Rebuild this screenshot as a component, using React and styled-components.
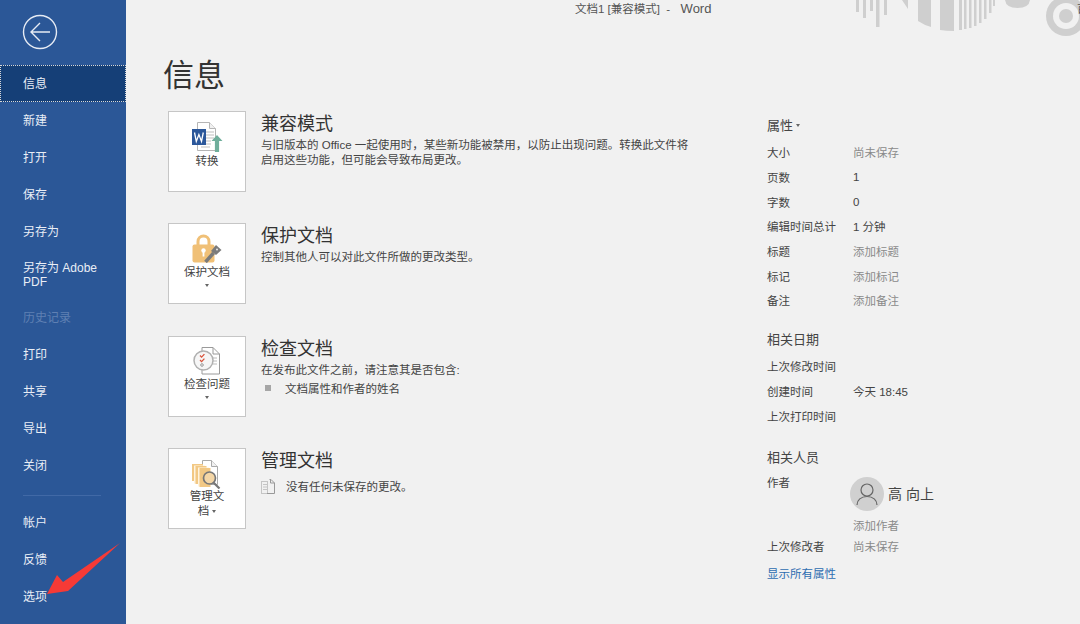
import React from "react";
import styled, { createGlobalStyle } from "styled-components";

const FONT = `"Liberation Sans", "Noto Sans CJK SC", sans-serif`;

const Global = createGlobalStyle`
    html, body { margin: 0; padding: 0; background: #f1f1f1; }
    body { font-family: ${FONT}; overflow: hidden; }
    * { box-sizing: border-box; }
`;

const Page = styled.div`
    position: relative;
    width: 1080px;
    height: 624px;
    display: flex;
    overflow: hidden;
    background: #f1f1f1;
    color: #444;
`;

const Side = styled.nav`
    width: 126px;
    height: 624px;
    flex-shrink: 0;
    background: #2b5797;
    display: flex;
    flex-direction: column;
`;

const BackWrap = styled.div`
    height: 65px;
    flex-shrink: 0;
    padding: 14px 0 0 22px;
`;

const NavItem = styled.div`
    height: ${p => (p.$tall ? 49 : 37)}px;
    flex-shrink: 0;
    padding-left: 23px;
    display: flex;
    align-items: center;
    font-size: 12px;
    line-height: 14px;
    color: ${p => (p.$disabled ? "#5f80b3" : "#e9eef6")};
    background: ${p => (p.$active ? "#153f77" : "transparent")};
    outline: ${p => (p.$active ? "1px dotted #d8d8d8" : "none")};
    outline-offset: -1px;
`;

const NavLine = styled.div`
    height: 1px;
    width: 78px;
    flex-shrink: 0;
    margin: 11px 0 8px 23px;
    background: #4169a6;
`;

const Main = styled.main`
    flex: 1;
    display: flex;
    min-width: 0;
`;

const LeftCol = styled.div`
    width: 641px;
    padding: 54px 0 0 37px;
    flex-shrink: 0;
`;

const Title = styled.h1`
    margin: 0 0 13px;
    height: 44px;
    font-size: 31px;
    line-height: 44px;
    font-weight: 400;
    color: #333;
`;

const Section = styled.section`
    display: flex;
    height: 112.4px;
    padding-left: 5px;
`;

const Tile = styled.div`
    width: 78px;
    height: 81px;
    flex-shrink: 0;
    background: #fff;
    border: 1px solid #c6c6c6;
    display: flex;
    flex-direction: column;
    align-items: center;
    padding-top: ${p => p.$top || 9}px;
    font-size: 11.5px;
    line-height: 14px;
    color: #444;
    text-align: center;
`;

const TileLabel = styled.div`
    margin-top: ${p => p.$gap || 0}px;
    width: ${p => p.$w || "auto"};
    line-height: ${p => (p.$w ? 15 : 14)}px;
`;

const Caret = styled.span`
    display: ${p => (p.$inline ? "inline-block" : "block")};
    width: 0;
    height: 0;
    margin: ${p => (p.$inline ? "0 0 2px 3px" : "5px auto 0")};
    border-left: 2.5px solid transparent;
    border-right: 2.5px solid transparent;
    border-top: 3px solid #666;
`;

const Body = styled.div`
    margin-left: 15px;
    padding-top: 1px;
    min-width: 0;
`;

const Heading = styled.h2`
    margin: 0 0 2px;
    font-size: 18px;
    line-height: 24px;
    font-weight: 400;
    color: #333;
`;

const Desc = styled.p`
    margin: 0;
    font-size: 11.5px;
    line-height: 15px;
    color: #444;
    width: 430px;
`;

const Bullet = styled.div`
    display: flex;
    align-items: center;
    height: 15px;
    margin-top: 3px;
    font-size: 11.5px;
    color: #444;
`;

const Square = styled.span`
    width: 6px;
    height: 6px;
    background: #a6a6a6;
    margin: 0 14px 0 4px;
`;

const NoteRow = styled.div`
    display: flex;
    align-items: center;
    gap: 11px;
    height: 16px;
    margin-top: 5px;
    font-size: 11.5px;
    color: #444;
`;

const RightCol = styled.aside`
    width: 313px;
    padding-top: 115px;
`;

const PropHead = styled.h3`
    margin: 0 0 3px;
    height: 22px;
    font-size: 13px;
    line-height: 22px;
    font-weight: 400;
    color: #444;
    display: flex;
    align-items: center;
`;

const PropGroup = styled.div`
    margin-bottom: ${p => p.$gap || 0}px;
`;

const PropRow = styled.div`
    display: flex;
    height: 24.7px;
    align-items: center;
    font-size: 11.5px;
`;

const PropLabel = styled.div`
    width: 86px;
    color: #444;
    white-space: nowrap;
`;

const PropValue = styled.div`
    color: ${p => (p.$muted ? "#8a8a8a" : "#444")};
    font-size: 11.5px;
    white-space: nowrap;
`;

const AuthorRow = styled.div`
    display: flex;
    height: 40px;
    padding-top: 2px;
    font-size: 11.5px;
`;

const AuthorLabel = styled(PropLabel)`
    line-height: 14px;
    padding-top: 2px;
    width: 83px;
`;

const Avatar = styled.div`
    width: 34px;
    height: 34px;
    margin-top: 3px;
    border-radius: 50%;
    background: #d0d0d0;
    display: flex;
    align-items: center;
    justify-content: center;
`;

const AuthorName = styled.div`
    margin: 3px 0 0 4px;
    height: 34px;
    line-height: 34px;
    font-size: 14px;
    color: #444;
`;

const AddAuthor = styled.div`
    height: 22px;
    padding: 7px 0 0 86px;
    font-size: 11.5px;
    line-height: 14px;
    color: #8a8a8a;
`;

const ShowAll = styled.div`
    margin-top: 8px;
    font-size: 11.5px;
    line-height: 14px;
    color: #2e6db0;
`;

const WindowTitle = styled.div`
    position: absolute;
    top: 2px;
    left: 575px;
    font-size: 11.5px;
    line-height: 14px;
    color: #555;
    white-space: pre;
`;

const WordMark = styled.span`
    font-size: 13px;
    margin-left: 4px;
`;

const Deco = styled.svg`
    position: absolute;
    top: 0;
    left: 840px;
`;

const CornerChar = styled.div`
    position: absolute;
    top: 2px;
    left: 1077px;
    font-size: 11px;
    line-height: 14px;
    color: #555;
`;

const ArrowMark = styled.svg`
    position: absolute;
    left: 40px;
    top: 538px;
`;

const BackIcon = () => (
    <svg width="36" height="36" viewBox="0 0 36 36" fill="none" stroke="#e6ebf4" strokeWidth="1.4">
        <circle cx="18" cy="18" r="16.5" />
        <path d="M9 18h19M18 9l-9 9 9 9" />
    </svg>
);

const ConvertIcon = () => (
    <svg width="31" height="31" viewBox="0 0 31 31">
        <path d="M5.500.5h12l6 6v22h-18z" fill="#fff" stroke="#b5b5b5" />
        <path d="M17.500.5v6h6" fill="#f1f1f1" stroke="#b5b5b5" />
        <path d="M14 10h8M14 13h8M14 16h8M14 19h5M14 22h5M9 25h9" stroke="#bdbdbd" />
        <rect x="0" y="7" width="14" height="16" fill="#2b579a" />
        <path d="M2.500 10.500l1.800 9 2.600-7 2.600 7 1.800-9" fill="none" stroke="#fff" strokeWidth="1.300" />
        <path d="M25 13l5.500 6h-3.400v11h-4.200V19h-3.400z" fill="#6fae9b" />
    </svg>
);

const LockIcon = () => (
    <svg width="30" height="29" viewBox="0 0 30 29">
        <path d="M6 12V7.500a5.500 5.500 0 0 1 11 0V12" fill="none" stroke="#f0c077" strokeWidth="3" />
        <rect x="0.500" y="10.500" width="22" height="18" rx="2" fill="#f0c077" />
        <circle cx="11.500" cy="16.500" r="2.200" fill="#fff" />
        <rect x="10.600" y="16.500" width="1.800" height="6" fill="#fff" />
        <path d="M13.500 28l8-9" stroke="#7b7b7b" strokeWidth="3.500" />
        <path d="M19 17l5-6 5.500 5-5.500 5z" fill="#7b7b7b" />
        <circle cx="25" cy="15.500" r="0.900" fill="#f1f1f1" />
    </svg>
);

const CheckIcon = () => (
    <svg width="28" height="28" viewBox="0 0 28 28">
        <path d="M9 .5h11l6.500 6.500v20H9z" fill="#fff" stroke="#9a9a9a" />
        <path d="M20 .5V7h6.500" fill="none" stroke="#9a9a9a" />
        <path d="M20 11h4M20 14h4M20 17h4" stroke="#bbb" />
        <circle cx="10.500" cy="13.500" r="9.500" fill="#f6f6f6" stroke="#b0b0b0" strokeWidth="1.500" />
        <path d="M7 8.500l1.600 1.600 2.800-3M7 13l1.600 1.600 2.800-3" fill="none" stroke="#d9533b" strokeWidth="1.300" />
        <circle cx="9" cy="18" r="1.300" fill="none" stroke="#999" />
    </svg>
);

const ManageIcon = () => (
    <svg width="30" height="29" viewBox="0 0 30 29">
        <path d="M10.500.500h9l6 6v18h-15z" fill="#fff" stroke="#aaa" />
        <path d="M19.500.500v6h6" fill="#f1f1f1" stroke="#aaa" />
        <rect x="0" y="4" width="11" height="17" fill="#f2c884" />
        <rect x="2" y="5.500" width="11" height="18" fill="#fff3dd" />
        <rect x="3.500" y="6" width="11" height="18" fill="#f2c884" />
        <rect x="6" y="7.500" width="11" height="19" fill="#fff3dd" />
        <rect x="7.500" y="8" width="11" height="19" fill="#f2c884" />
        <circle cx="17.500" cy="18" r="6" fill="#f4d6a6" stroke="#777" strokeWidth="1.700" />
        <path d="M21.500 22.500l6 6" stroke="#777" strokeWidth="2.200" />
    </svg>
);

const DraftIcon = () => (
    <svg width="14" height="15" viewBox="0 0 14 15" fill="none" stroke="#999">
        <path d="M8.500.500h1.500l3.500 3.500v10.500H6" />
        <path d="M9.500.500V4h4" />
        <path d="M.500 2.500h6v12h-6z" strokeDasharray="1 1" />
        <path d="M2.500 5.500h3M2.500 8h3M2.500 10.500h3" strokeDasharray="1 1" />
    </svg>
);

const UserIcon = () => (
    <svg width="22" height="24" viewBox="0 0 22 24" fill="none" stroke="#666" strokeWidth="1.200">
        <circle cx="11" cy="8" r="6" />
        <path d="M1 23c0-5 4-8.500 10-8.500S21 18 21 23" />
    </svg>
);

const navTop = ["新建", "打开", "保存", "另存为"];
const navMid = ["打印", "共享", "导出", "关闭"];
const navBottom = ["帐户", "反馈", "选项"];

const props = [
    ["大小", "尚未保存", true],
    ["页数", "1", false],
    ["字数", "0", false],
    ["编辑时间总计", "1 分钟", false],
    ["标题", "添加标题", true],
    ["标记", "添加标记", true],
    ["备注", "添加备注", true],
];

const dates = [
    ["上次修改时间", ""],
    ["创建时间", "今天 18:45"],
    ["上次打印时间", ""],
];

export default function App() {
    return (
        <Page>
            <Global />
            <Side>
                <BackWrap><BackIcon /></BackWrap>
                <NavItem $active>信息</NavItem>
                {navTop.map(t => <NavItem key={t}>{t}</NavItem>)}
                <NavItem $tall>另存为 Adobe<br />PDF</NavItem>
                <NavItem $disabled>历史记录</NavItem>
                {navMid.map(t => <NavItem key={t}>{t}</NavItem>)}
                <NavLine />
                {navBottom.map(t => <NavItem key={t}>{t}</NavItem>)}
            </Side>
            <Main>
                <LeftCol>
                    <Title>信息</Title>
                    <Section>
                        <Tile $top={10}>
                            <ConvertIcon />
                            <TileLabel $gap={1}>转换</TileLabel>
                        </Tile>
                        <Body>
                            <Heading>兼容模式</Heading>
                            <Desc>与旧版本的 Office 一起使用时，某些新功能被禁用，以防止出现问题。转换此文件将启用这些功能，但可能会导致布局更改。</Desc>
                        </Body>
                    </Section>
                    <Section>
                        <Tile $top={10}>
                            <LockIcon />
                            <TileLabel $gap={2}>保护文档</TileLabel>
                            <Caret />
                        </Tile>
                        <Body>
                            <Heading>保护文档</Heading>
                            <Desc>控制其他人可以对此文件所做的更改类型。</Desc>
                        </Body>
                    </Section>
                    <Section>
                        <Tile $top={10}>
                            <CheckIcon />
                            <TileLabel $gap={2}>检查问题</TileLabel>
                            <Caret />
                        </Tile>
                        <Body>
                            <Heading>检查文档</Heading>
                            <Desc>在发布此文件之前，请注意其是否包含:</Desc>
                            <Bullet><Square />文档属性和作者的姓名</Bullet>
                        </Body>
                    </Section>
                    <Section>
                        <Tile $top={11}>
                            <ManageIcon />
                            <TileLabel $w="40px">管理文档<Caret $inline /></TileLabel>
                        </Tile>
                        <Body>
                            <Heading>管理文档</Heading>
                            <NoteRow><DraftIcon />没有任何未保存的更改。</NoteRow>
                        </Body>
                    </Section>
                </LeftCol>
                <RightCol>
                    <PropGroup $gap={16}>
                        <PropHead>属性<Caret $inline /></PropHead>
                        {props.map(([k, v, muted]) => (
                            <PropRow key={k}>
                                <PropLabel>{k}</PropLabel>
                                <PropValue $muted={muted}>{v}</PropValue>
                            </PropRow>
                        ))}
                    </PropGroup>
                    <PropGroup $gap={19}>
                        <PropHead>相关日期</PropHead>
                        {dates.map(([k, v]) => (
                            <PropRow key={k}>
                                <PropLabel>{k}</PropLabel>
                                <PropValue>{v}</PropValue>
                            </PropRow>
                        ))}
                    </PropGroup>
                    <PropGroup>
                        <PropHead>相关人员</PropHead>
                        <AuthorRow>
                            <AuthorLabel>作者</AuthorLabel>
                            <Avatar><UserIcon /></Avatar>
                            <AuthorName>高 向上</AuthorName>
                        </AuthorRow>
                        <AddAuthor>添加作者</AddAuthor>
                        <PropRow>
                            <PropLabel>上次修改者</PropLabel>
                            <PropValue $muted>尚未保存</PropValue>
                        </PropRow>
                        <ShowAll>显示所有属性</ShowAll>
                    </PropGroup>
                </RightCol>
            </Main>
            <WindowTitle>文档1 [兼容模式]  -  <WordMark>Word</WordMark></WindowTitle>
            <Deco width="240" height="40" viewBox="0 0 240 40" fill="#cfcfcf">
                <path d="M16 0h3v12h-3zM23 0h3v18h-3zM30 0h3v11h-3zM36 0h3.500v27H36zM44 0h3v15h-3z" />
                <path d="M62 0h6v9z" />
                <path d="M78 0h13v27q-7-2-13-6z" />
                <path d="M100 0h14v31q-8 0-14-1z" />
                <path d="M119 0h3v30h-3zM124 0h2.500v29H124zM129 0h2.500v28H129zM134 0h2.500v26H134zM139 0h2.500v23H139zM144 0h2.500v19H144zM149 0h2.500v13H149zM153 0h2v6h-2z" />
                <path d="M165 0h25q-1 8-12.500 8T165 0z" />
                <circle cx="226" cy="16" r="20" />
                <circle cx="226" cy="16" r="13" fill="#f1f1f1" />
                <circle cx="226" cy="16" r="7" />
            </Deco>
            <CornerChar>百</CornerChar>
            <ArrowMark width="84" height="62" viewBox="0 0 84 62">
                <path d="M7 56L17 37l6 7L80 5 28 53z" fill="#f63a36" />
            </ArrowMark>
        </Page>
    );
}
